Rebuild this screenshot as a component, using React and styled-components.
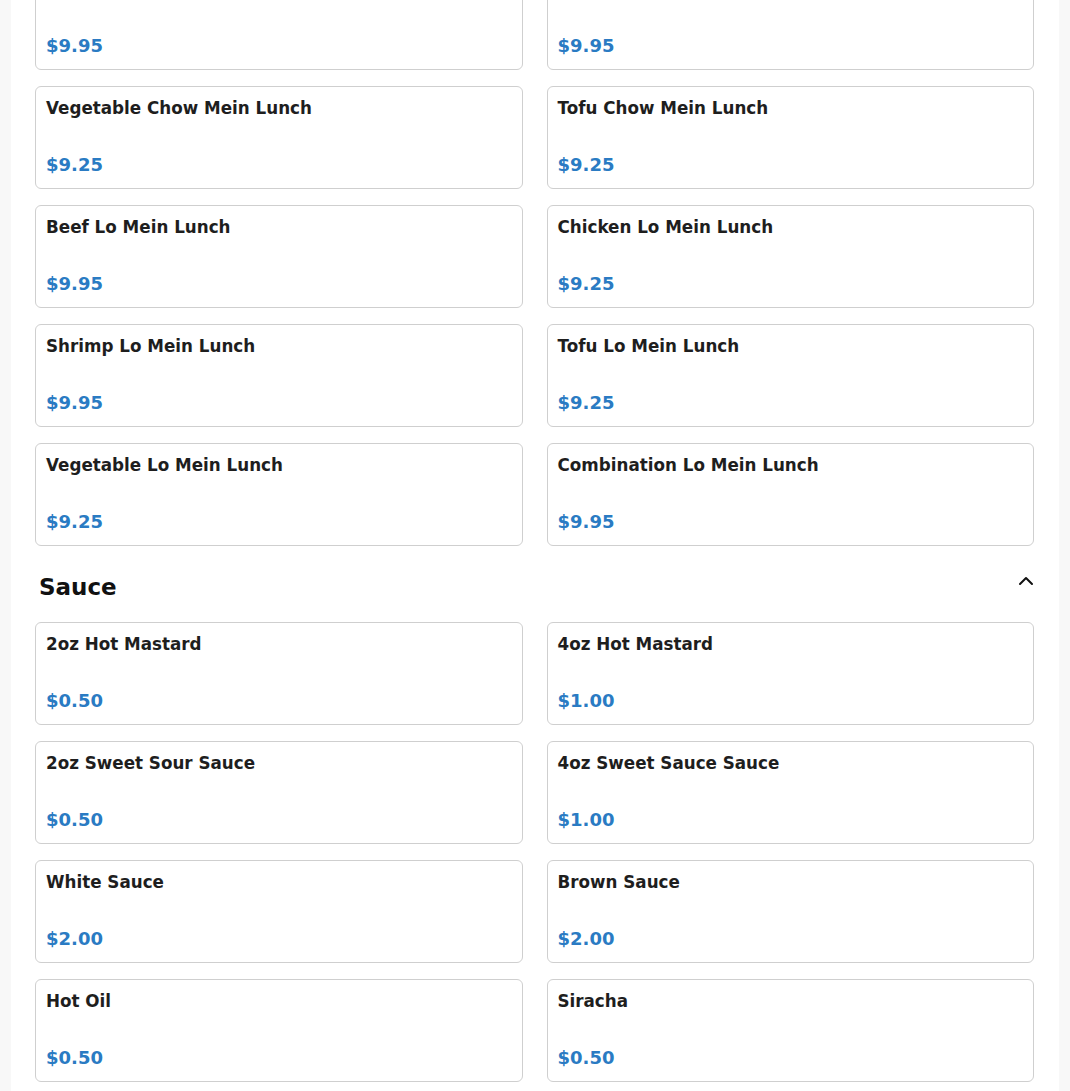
import React, { useLayoutEffect, useRef } from 'react';
import styled, { createGlobalStyle } from 'styled-components';

const GlobalStyle = createGlobalStyle`
  html, body {
    margin: 0;
    padding: 0;
    background: #f8f8f8;
    font-family: "DejaVu Sans", "Liberation Sans", sans-serif;
  }
`;

const Page = styled.div`
  width: 1048px;
  margin: 0 auto;
  background: #ffffff;
  padding: 0 25px 40px 24px;
  box-sizing: border-box;
  min-height: 100vh;
`;

const Section = styled.section`
  display: flex;
  flex-direction: column;
`;

const SectionHeader = styled.div`
  display: flex;
  justify-content: space-between;
  align-items: center;
  padding: 0 4px;
  margin: 25px 0 19px;
  height: 32px;
  cursor: pointer;
`;

const SectionTitle = styled.h2`
  margin: 0;
  font-size: 23px;
  font-weight: 700;
  color: #111111;
`;

const Chevron = styled.svg`
  width: 24px;
  height: 24px;
  margin-top: -12px;
  margin-right: -8px;
`;

const Grid = styled.div`
  display: grid;
  grid-template-columns: 1fr 1fr;
  column-gap: 24px;
  row-gap: 16px;
`;

const Card = styled.div`
  box-sizing: border-box;
  height: 103px;
  padding: 11px 10px 12px;
  border: 1px solid #cfcfcf;
  border-radius: 6px;
  background: #ffffff;
  display: flex;
  flex-direction: column;
  justify-content: space-between;
`;

const ItemName = styled.h3`
  margin: 0;
  font-size: 16.75px;
  line-height: 1.2;
  font-weight: 700;
  color: #1e1e1e;
`;

const Price = styled.div`
  font-size: 18px;
  line-height: 1.2;
  font-weight: 700;
  color: #2a7bc3;
`;

const lunch = [
  ['Chicken Chow Mein Lunch', '9.25'],
  ['Pork Chow Mein Lunch', '9.25'],
  ['Beef Chow Mein Lunch', '9.95'],
  ['Shrimp Chow Mein Lunch', '9.95'],
  ['Vegetable Chow Mein Lunch', '9.25'],
  ['Tofu Chow Mein Lunch', '9.25'],
  ['Beef Lo Mein Lunch', '9.95'],
  ['Chicken Lo Mein Lunch', '9.25'],
  ['Shrimp Lo Mein Lunch', '9.95'],
  ['Tofu Lo Mein Lunch', '9.25'],
  ['Vegetable Lo Mein Lunch', '9.25'],
  ['Combination Lo Mein Lunch', '9.95'],
];

const sauces = [
  ['2oz Hot Mastard', '0.50'],
  ['4oz Hot Mastard', '1.00'],
  ['2oz Sweet Sour Sauce', '0.50'],
  ['4oz Sweet Sauce Sauce', '1.00'],
  ['White Sauce', '2.00'],
  ['Brown Sauce', '2.00'],
  ['Hot Oil', '0.50'],
  ['Siracha', '0.50'],
  ['Soy Sauce', '0.25'],
  ['Duck Sauce', '0.25'],
];

const MenuSection = ({ title, items, anchorName, anchorRef }) => (
  <Section>
    <SectionHeader>
      <SectionTitle>{title}</SectionTitle>
      <Chevron viewBox="0 0 24 24" fill="none" stroke="#111" strokeWidth="2" strokeLinecap="round" strokeLinejoin="round">
        <path d="M6 15l6-6 6 6" />
      </Chevron>
    </SectionHeader>
    <Grid>
      {items.map(([name, price]) => (
        <Card key={name} ref={name === anchorName ? anchorRef : undefined}>
          <ItemName>{name}</ItemName>
          <Price>${price}</Price>
        </Card>
      ))}
    </Grid>
  </Section>
);

const App = () => {
  const anchor = useRef(null);

  useLayoutEffect(() => {
    // keep the page where the screenshot was taken
    if (anchor.current) {
      const top = anchor.current.getBoundingClientRect().top + window.scrollY;
      window.scrollTo(0, top - 86);
    }
  }, []);

  return (
    <>
      <GlobalStyle />
      <Page>
        <MenuSection title="Lunch Special" items={lunch} anchorName="Vegetable Chow Mein Lunch" anchorRef={anchor} />
        <MenuSection title="Sauce" items={sauces} />
      </Page>
    </>
  );
};

export default App;
